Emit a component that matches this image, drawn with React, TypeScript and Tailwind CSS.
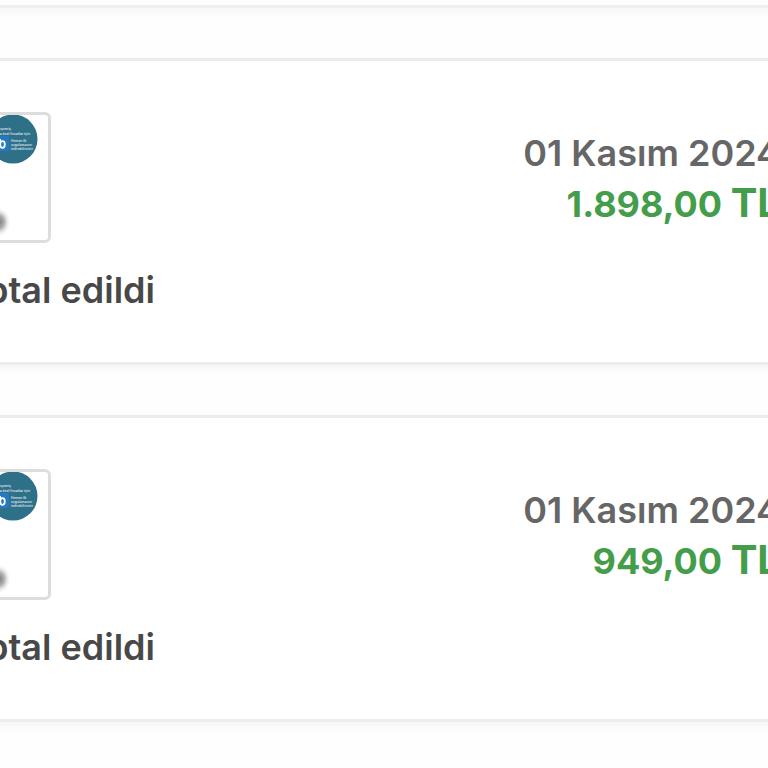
import { X } from 'lucide-react';

interface Order {
  id: number;
  date: string;
  amount: string;
  status: string;
}

const orders: Order[] = [
  { id: 1, date: '01 Kasım 2024', amount: '1.898,00', status: 'İptal edildi' },
  { id: 2, date: '01 Kasım 2024', amount: '949,00', status: 'İptal edildi' },
];

function ProductThumb({ id }: { id: number }) {
  return (
    <div className="w-[131px] h-[131px] rounded-md border-3 border-[#dddddd] bg-white overflow-hidden">
      <svg viewBox="0 0 125 125" className="w-full h-full" role="img" aria-label="Ürün">
        <defs>
          <radialGradient id={`shade-${id}`}>
            <stop offset="0" stopColor="#777777" />
            <stop offset="0.45" stopColor="#999999" stopOpacity="0.75" />
            <stop offset="1" stopColor="#ffffff" stopOpacity="0" />
          </radialGradient>
        </defs>
        <circle cx="90" cy="24" r="24.5" fill="#2f7089" />
        <g fill="#c3d8e2" fontFamily="Inter, sans-serif" fontWeight="700">
          <text x="88" y="15" textAnchor="end" fontSize="3.4">alışveriş</text>
          <text x="107" y="20" textAnchor="end" fontSize="3.4">sana özel fırsatlar için</text>
          <text x="88" y="27" fontSize="3.2">Hemen ilk</text>
          <text x="88" y="31" fontSize="3.2">uygulamasını</text>
          <text x="88" y="35" fontSize="3.2">indirebilirsiniz</text>
        </g>
        <rect x="71" y="21" width="15" height="15" rx="2" fill="#2478c4" />
        <path d="M77 24v3" fill="none" stroke="#ffffff" strokeWidth="2" />
        <ellipse cx="79.5" cy="29.5" rx="2.3" ry="3.3" fill="none" stroke="#ffffff" strokeWidth="1.8" />
        <ellipse cx="76" cy="107" rx="12" ry="15" fill={`url(#shade-${id})`} />
      </svg>
    </div>
  );
}

function OrderCard({ order }: { order: Order }) {
  return (
    <article className="-mx-24 px-4 pt-[51px] pb-[49px] border-y-3 border-[#ececec] bg-white shadow-[0_4px_10px_rgba(0,0,0,0.04)]">
      <div className="flex justify-between">
        <ProductThumb id={order.id} />
        <div className="pt-4 pr-17 text-right whitespace-nowrap">
          <p className="text-[36px] leading-[50px] font-semibold text-[#666666]">{order.date}</p>
          <p className="text-[36px] leading-[50px] font-bold text-[#439d4b]">
            {order.amount} <span className="text-[40px]">TL</span>
          </p>
        </div>
      </div>
      <div className="flex items-center gap-5 pt-6 text-[#484848]">
        <X size={36} />
        <span className="text-[36px] leading-[46px] font-semibold">{order.status}</span>
      </div>
    </article>
  );
}

export default function App() {
  return (
    <main className="min-h-screen overflow-hidden bg-[#fefefe] font-['Inter',sans-serif]">
      <div className="-mx-24 h-2 border-b-3 border-[#efefef] shadow-[0_4px_10px_rgba(0,0,0,0.04)]" />
      <div className="flex flex-col gap-[50px] pt-[50px]">
        {orders.map((order) => (
          <OrderCard key={order.id} order={order} />
        ))}
      </div>
    </main>
  );
}
